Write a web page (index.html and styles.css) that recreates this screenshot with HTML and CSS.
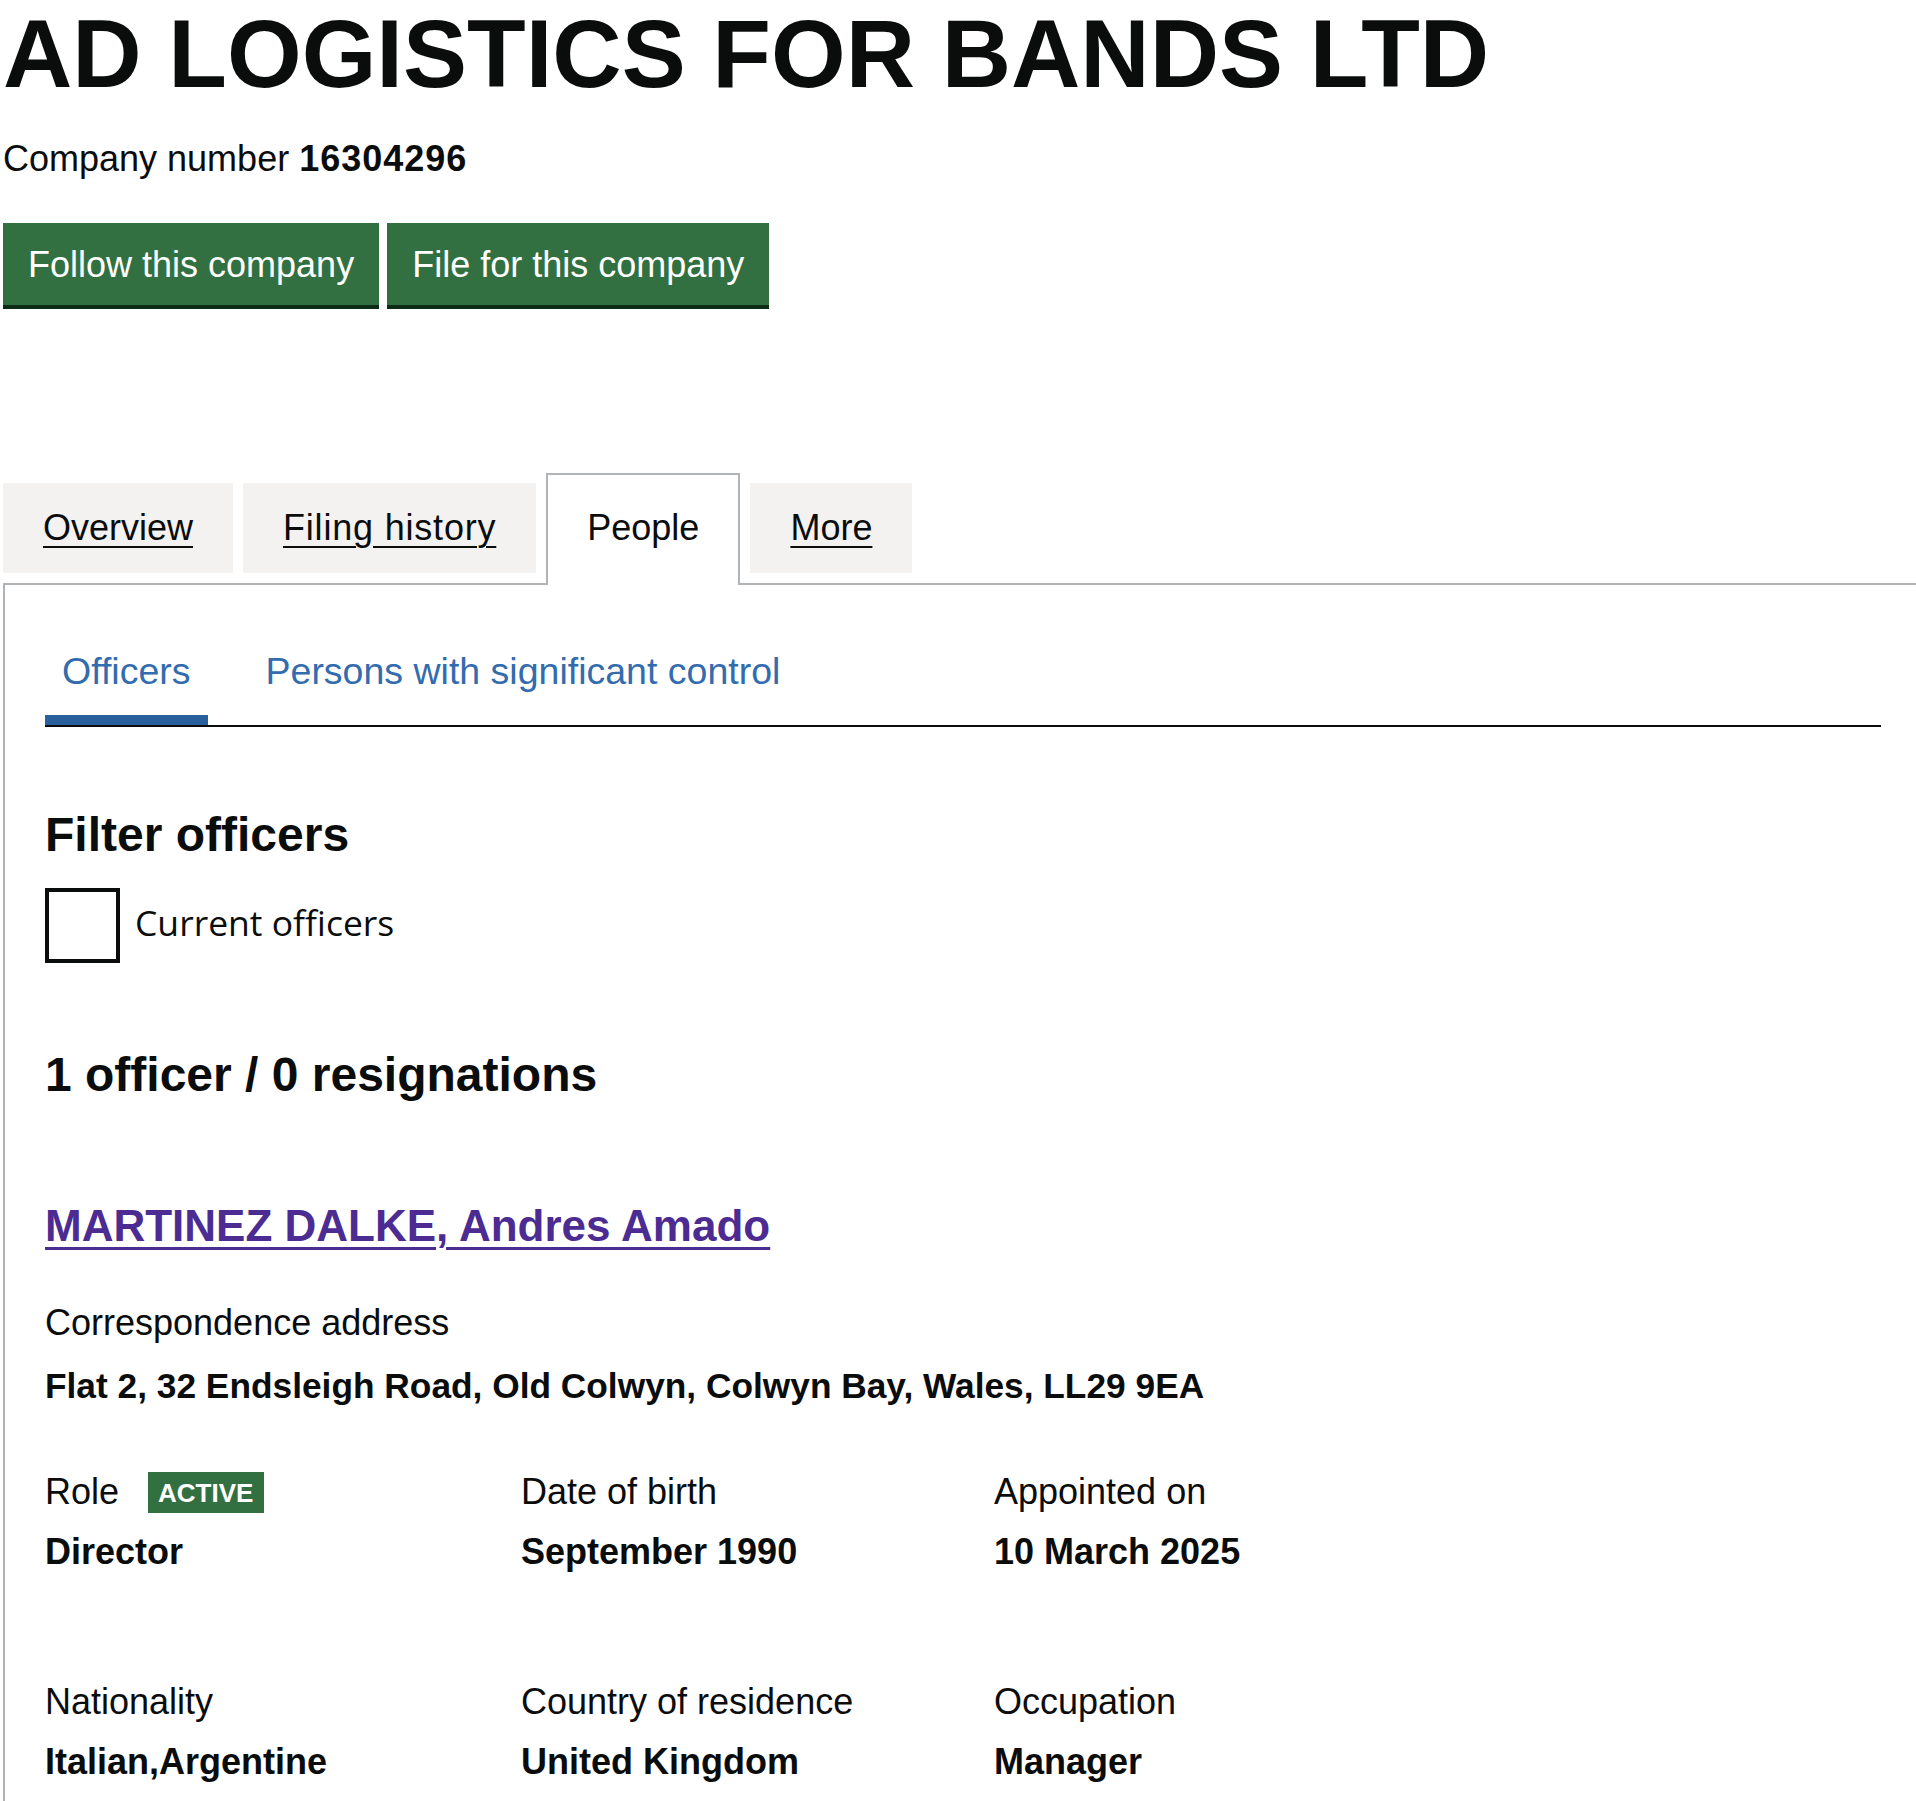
FILE: index.html
```html
<!DOCTYPE html>
<html lang="en">
<head>
<meta charset="utf-8">
<title>AD LOGISTICS FOR BANDS LTD - People</title>
<link rel="stylesheet" href="styles.css">
</head>
<body>
<main class="page">
  <h1 class="company-name">AD LOGISTICS FOR BANDS LTD</h1>
  <p class="company-number">Company number <strong>16304296</strong></p>
  <div class="actions">
    <a class="button" href="#">Follow this company</a>
    <a class="button" href="#">File for this company</a>
  </div>

  <div class="tabs">
    <ul class="tabs-list">
      <li class="tab"><a class="tab-link" href="#">Overview</a></li>
      <li class="tab"><a class="tab-link tab-wide" href="#">Filing history</a></li>
      <li class="tab tab-selected"><span class="tab-current">People</span></li>
      <li class="tab"><a class="tab-link" href="#">More</a></li>
    </ul>

    <div class="panel">
      <ul class="subnav">
        <li class="subnav-item subnav-active"><a class="subnav-link" href="#">Officers</a></li>
        <li class="subnav-item"><a class="subnav-link" href="#">Persons with significant control</a></li>
      </ul>

      <h2 class="heading filter-heading">Filter officers</h2>
      <label class="checkbox">
        <span class="checkbox-box"></span>
        <span class="checkbox-label">Current officers</span>
      </label>

      <h2 class="heading count-heading">1 officer / 0 resignations</h2>

      <div class="appointment">
        <h2 class="officer-name"><a class="officer-link" href="#">MARTINEZ DALKE, Andres Amado</a></h2>

        <dl class="address">
          <dt class="label">Correspondence address</dt>
          <dd class="value">Flat 2, 32 Endsleigh Road, Old Colwyn, Colwyn Bay, Wales, LL29 9EA</dd>
        </dl>

        <div class="details">
          <dl class="detail">
            <dt class="label label-role">Role <span class="badge">ACTIVE</span></dt>
            <dd class="value">Director</dd>
          </dl>
          <dl class="detail">
            <dt class="label">Date of birth</dt>
            <dd class="value">September 1990</dd>
          </dl>
          <dl class="detail">
            <dt class="label">Appointed on</dt>
            <dd class="value">10 March 2025</dd>
          </dl>
          <dl class="detail">
            <dt class="label">Nationality</dt>
            <dd class="value">Italian,Argentine</dd>
          </dl>
          <dl class="detail">
            <dt class="label">Country of residence</dt>
            <dd class="value">United Kingdom</dd>
          </dl>
          <dl class="detail">
            <dt class="label">Occupation</dt>
            <dd class="value">Manager</dd>
          </dl>
        </div>
      </div>
    </div>
  </div>
</main>
</body>
</html>
```

FILE: styles.css
```css
html {
  overflow: hidden;
  background: #ffffff;
}

body {
  margin: 0;
  font-family: "Liberation Sans", Arial, sans-serif;
  color: #0b0c0c;
  font-size: 36px;
  line-height: 50px;
}

.page {
  width: 1920px;
  margin-left: 3px;
  padding-top: 4px;
}

.company-name {
  margin: 0;
  font-size: 96px;
  line-height: 100px;
  font-weight: 700;
}

.company-number {
  margin: 30px 0 0;
}

.company-number strong {
  font-weight: 700;
  letter-spacing: 1px;
}

.actions {
  display: flex;
  gap: 8px;
  margin-top: 39px;
}

.button {
  display: inline-block;
  background: #327041;
  color: #ffffff;
  text-decoration: none;
  border: 4px solid transparent;
  padding: 16px 21px 14px;
  line-height: 44px;
  box-shadow: 0 4px 0 #0d2c17;
}

/* Tabs */
.tabs {
  margin-top: 168px;
}

.tabs-list {
  display: flex;
  align-items: flex-start;
  margin: 0;
  padding: 0;
  list-style: none;
  border-bottom: 2px solid #b1b4b6;
}

.tab {
  margin: 10px 10px 0 0;
  padding: 20px 40px;
  background: #f3f2f1;
}

.tab-link {
  color: #0b0c0c;
  text-decoration: underline;
  text-decoration-thickness: 2px;
  text-underline-offset: 6px;
}

.tab-wide {
  letter-spacing: 0.8px;
}

.tab-selected {
  margin-top: 0;
  margin-bottom: -2px;
  padding: 28px 39px 32px;
  background: #ffffff;
  border: 2px solid #b1b4b6;
  border-bottom: 0;
}

.panel {
  padding: 61px 40px 60px;
  border: 2px solid #b1b4b6;
  border-top: 0;
}

/* Secondary navigation */
.subnav {
  display: flex;
  margin: 0;
  padding: 0;
  list-style: none;
  border-bottom: 2px solid #0b0c0c;
}

.subnav-item {
  margin-right: 41px;
  border-bottom: 10px solid transparent;
}

.subnav-active {
  border-bottom-color: #2a5f9e;
}

.subnav-link {
  display: block;
  padding: 0 17px 19px;
  color: #336cae;
  font-size: 37.5px;
  text-decoration: none;
}

/* Headings */
.heading {
  margin: 0;
  font-size: 48px;
  line-height: 50px;
  font-weight: 700;
}

.filter-heading {
  margin-top: 83px;
}

.checkbox {
  display: flex;
  align-items: center;
  margin-top: 28px;
}

.checkbox-box {
  box-sizing: border-box;
  width: 75px;
  height: 75px;
  border: 4px solid #0b0c0c;
  background: #ffffff;
}

.checkbox-label {
  margin-left: 15px;
  margin-top: -8px;
  font-family: "Open Sans", "Noto Sans", sans-serif;
  font-size: 35.5px;
}

.count-heading {
  margin-top: 87px;
}

/* Appointment */
.appointment {
  margin-top: 101px;
}

.officer-name {
  margin: 0;
  font-size: 44px;
  line-height: 50px;
  font-weight: 700;
}

.officer-link {
  color: #4c2c92;
  text-decoration: underline;
  text-decoration-thickness: 3px;
  text-underline-offset: 6px;
}

.address {
  margin: 47px 0 0;
}

.label {
  display: block;
  margin: 0;
}

.value {
  margin: 0;
  font-weight: 700;
}

.address .value {
  margin-top: 13px;
  font-size: 35.3px;
}

.details {
  display: grid;
  grid-template-columns: 476px 473px 1fr;
  row-gap: 100px;
  margin-top: 56px;
}

.detail {
  margin: 0;
}

.detail .value {
  margin-top: 10px;
}

.label-role {
  display: flex;
  align-items: center;
}

.badge {
  display: inline-block;
  margin-left: 29px;
  padding: 6px 11px 5px 10px;
  background: #327041;
  color: #ffffff;
  font-size: 26px;
  line-height: 30px;
  font-weight: 700;
}
```
